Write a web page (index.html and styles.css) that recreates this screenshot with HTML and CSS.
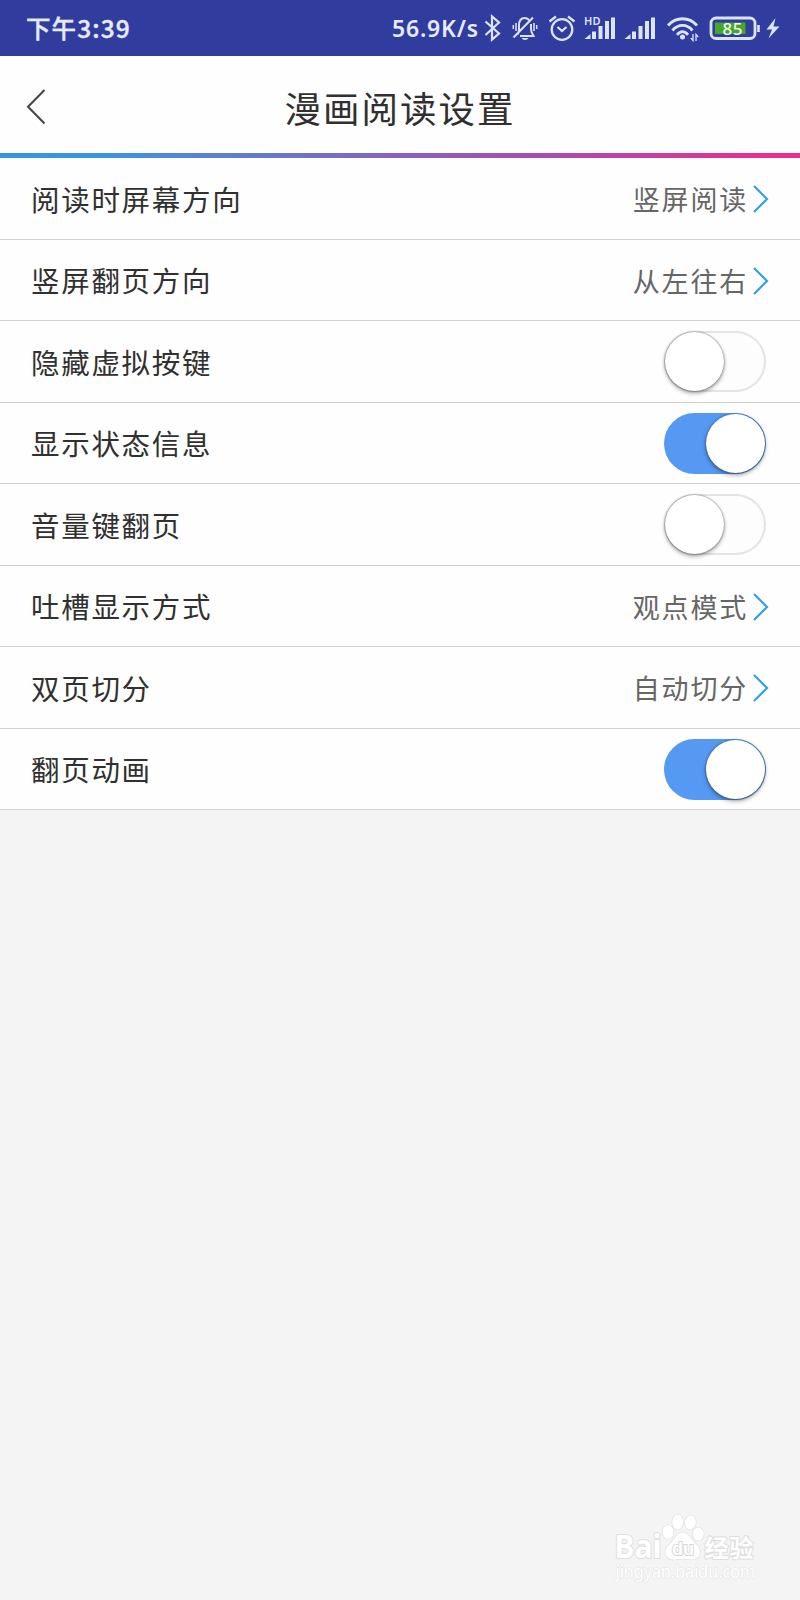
FILE: index.html
```html
<!DOCTYPE html>
<html lang="zh-CN">
<head>
    <meta charset="UTF-8">
    <meta name="viewport" content="width=device-width, initial-scale=1.0">
    <title>漫画阅读设置</title>
    <link rel="stylesheet" href="styles.css">
</head>
<body>

<div class="status-bar">
    <span class="clock">下午3:39</span>
    <div class="status-right">
        <span class="speed">56.9K/s</span>
        <svg class="status-icons" width="300" height="56" viewBox="480 0 300 56" fill="none" stroke="#dde4ff" stroke-width="2">
            <!-- bluetooth -->
            <path d="M485.500 21.500L499 33.500L492 39.500V16.500L499 22.500L485.500 35" stroke-width="2.200"/>
            <!-- muted bell -->
            <path d="M517.500 34.500C519.500 32 519 29 519 25.500C519 20.500 521 18 524.500 18C526.500 18 528 18.800 529 20M531 24V29C531 32 532 33.500 533.500 36H520M513.500 37.500L533 17.500"/>
            <path d="M516 23V31M513.300 25V29M534 23V31M536.700 25V29" stroke-width="1.500"/>
            <path d="M521.500 38H528.500C527 40.500 523 40.500 521.500 38Z" fill="#dde4ff" stroke="none"/>
            <!-- alarm -->
            <circle cx="562" cy="29.500" r="10.300" stroke-width="2.300"/>
            <path d="M557.500 27L562 31L566.500 27M549.500 21.500L556 16.500M568 16.500L574.500 21.500" stroke-width="2.300"/>
            <!-- signal -->
            <g fill="#dde4ff" stroke="none">
                <path d="M584.500 39L590.500 34V39ZM592 31.500H596V39H592ZM598.500 26H602.500V39H598.500ZM605 21H609V39H605ZM611 17.500H615V39H611Z"/>
                <path d="M624.500 39L630.500 34V39ZM632 31.500H636V39H632ZM638.500 26H642.500V39H638.500ZM645 21H649V39H645ZM651 17.500H655V39H651Z"/>
            </g>
            <text class="hd" x="584" y="24.500" textLength="16.500">HD</text>
            <!-- wifi -->
            <path d="M668 25.500C676 16.500 689 16.500 697 25.500M672.500 30.500C678 23.800 687 23.800 692.500 30.500M677 34.800C680.500 30.500 684.500 30.500 688 34.800" stroke-width="2.800"/>
            <circle cx="682.500" cy="37" r="2.500" fill="#dde4ff" stroke="none"/>
            <path d="M693 34V40.500L690.800 38M696 41V34.500L698.200 37" stroke-width="1.300"/>
            <!-- battery -->
            <rect x="711" y="18" width="44" height="20.500" rx="5" stroke-width="2.800"/>
            <rect x="715" y="22.500" width="30.500" height="11.500" fill="#47a52c" stroke="none"/>
            <path d="M758.500 25V32" stroke-width="2.600"/>
            <text class="battery-text" x="722.500" y="34.800" textLength="20">85</text>
            <path d="M775.500 18L766.500 29.500H772L768.500 38.500L779.500 26.500H773.500Z" fill="#dde4ff" stroke="none"/>
        </svg>
    </div>
</div>

<header>
    <svg class="back" width="20" height="36" viewBox="0 0 20 36"><path d="M18.500 1L2 17.800L18.500 34.500"/></svg>
    <h1>漫画阅读设置</h1>
</header>

<ul class="settings">
    <li>
        <span class="label">阅读时屏幕方向</span>
        <span class="value">竖屏阅读</span>
        <svg class="arrow" width="16" height="28" viewBox="0 0 16 28"><path d="M1 1L14 14L1 27"/></svg>
    </li>
    <li>
        <span class="label">竖屏翻页方向</span>
        <span class="value">从左往右</span>
        <svg class="arrow" width="16" height="28" viewBox="0 0 16 28"><path d="M1 1L14 14L1 27"/></svg>
    </li>
    <li>
        <span class="label">隐藏虚拟按键</span>
        <span class="switch"><span class="knob"></span></span>
    </li>
    <li>
        <span class="label">显示状态信息</span>
        <span class="switch on"><span class="knob"></span></span>
    </li>
    <li>
        <span class="label">音量键翻页</span>
        <span class="switch"><span class="knob"></span></span>
    </li>
    <li>
        <span class="label">吐槽显示方式</span>
        <span class="value">观点模式</span>
        <svg class="arrow" width="16" height="28" viewBox="0 0 16 28"><path d="M1 1L14 14L1 27"/></svg>
    </li>
    <li>
        <span class="label">双页切分</span>
        <span class="value">自动切分</span>
        <svg class="arrow" width="16" height="28" viewBox="0 0 16 28"><path d="M1 1L14 14L1 27"/></svg>
    </li>
    <li>
        <span class="label">翻页动画</span>
        <span class="switch on"><span class="knob"></span></span>
    </li>
</ul>

<footer>
    <svg width="150" height="80" viewBox="610 1510 150 80">
        <g class="mark">
            <ellipse cx="668" cy="1532" rx="5.500" ry="7"/>
            <ellipse cx="677.700" cy="1522" rx="5.500" ry="7.500"/>
            <ellipse cx="690.300" cy="1522.500" rx="5.500" ry="7" transform="rotate(10 690.300 1522.500)"/>
            <ellipse cx="698.300" cy="1534" rx="5.500" ry="6.500"/>
            <path d="M682.500 1533C675 1533 674 1541 669 1545C662 1551 666 1560 674 1559.500C680 1559 685 1559 691 1559.500C700 1560 703 1551 697 1545C691 1540 690 1533 682.500 1533Z"/>
            <text class="bai" x="614.500" y="1558" textLength="47" lengthAdjust="spacingAndGlyphs">Bai</text>
            <text class="du" x="672" y="1554.500" textLength="22" lengthAdjust="spacingAndGlyphs">du</text>
            <text class="jingyan" x="704.500" y="1557" textLength="49">经验</text>
            <text class="site" x="615.500" y="1578" textLength="139.500" lengthAdjust="spacingAndGlyphs">jingyan.baidu.com</text>
        </g>
    </svg>
</footer>

</body>
</html>
```
FILE: styles.css
```css
* {
    box-sizing: border-box;
}

body {
    margin: 0;
    width: 800px;
    height: 1600px;
    display: flex;
    flex-direction: column;
    font-family: "Noto Sans CJK SC", sans-serif;
    background-color: #f4f4f4;
    color: #303030;
    overflow: hidden;
}

/* Phone status bar */
.status-bar {
    display: flex;
    justify-content: space-between;
    align-items: center;
    height: 56px;
    padding: 0 20px 0 26px;
    background-color: #303c9e;
    color: #e6ebff;
    font-weight: 700;
}

.clock {
    font-size: 24.5px;
    letter-spacing: 1.1px;
    font-weight: 500;
    padding-bottom: 2px;
    -webkit-text-stroke: 0.4px #e6ebff;
}

.status-right {
    display: flex;
    align-items: center;
}

.speed {
    font-family: "Noto Sans", sans-serif;
    font-size: 23px;
    font-weight: 600;
    letter-spacing: 0.8px;
    width: 88px;
    white-space: nowrap;
}

.hd {
    font: 600 11px "Noto Sans", sans-serif;
    fill: #dde4ff;
    stroke: none;
}

.battery-text {
    font: 500 17px "Noto Sans", sans-serif;
    fill: #f4fff4;
    stroke: none;
}

/* Title bar */
header {
    display: flex;
    align-items: center;
    height: 102px;
    padding: 0 26px;
    background-color: #fefefe;
    border-bottom: 5px solid;
    border-image: linear-gradient(to right, #3498db, #3b96dc 13%, #7270cb 38%, #a64db5 67%, #e6318f 95%) 1;
}

.back {
    margin-top: 4px;
}

.back path {
    fill: none;
    stroke: #444;
    stroke-width: 2;
}

h1 {
    flex: 1;
    margin: 5px 20px 0 0;
    text-align: center;
    font-size: 36.5px;
    font-weight: 400;
    letter-spacing: 2px;
}

/* Settings list */
.settings {
    margin: 0;
    padding: 0;
    list-style: none;
}

.settings li {
    display: flex;
    align-items: center;
    height: 81.5px;
    padding: 0 31px;
    background-color: #fefefe;
    border-bottom: 1px solid #d2d2d2;
}

.label {
    flex: 1;
    font-size: 28.5px;
    letter-spacing: 1.7px;
}

.value {
    font-size: 27px;
    letter-spacing: 1.8px;
    color: #666;
    padding-top: 1px;
    margin-right: 5px;
}

.arrow {
    margin-top: 2px;
}

.arrow path {
    fill: none;
    stroke: #2f9fe8;
    stroke-width: 2.2;
}

.switch {
    display: flex;
    width: 102px;
    height: 61px;
    margin: 1px 3.5px 0 0;
    padding: 1px;
    border-radius: 31px;
    background-color: #fefdfd;
    box-shadow: inset 0 0 0 2px #e6e3e3;
}

.switch.on {
    justify-content: flex-end;
    background-color: #5599f2;
    box-shadow: none;
}

.knob {
    width: 59px;
    height: 59px;
    border-radius: 50%;
    background-color: #fff;
    box-shadow: 0 2px 4px rgba(0, 0, 0, 0.4), 0 0 2px rgba(0, 0, 0, 0.5);
}

/* Watermark */
footer {
    margin-top: auto;
    padding: 0 40px 10px 0;
    text-align: right;
}

footer svg {
    display: block;
    margin-left: auto;
}

.mark {
    fill: #fff;
    stroke: #dedede;
    stroke-width: 1.2px;
    paint-order: stroke;
}

.bai {
    font: 700 32px "Noto Sans", sans-serif;
    stroke-width: 2px;
}

.du {
    font: 700 19px "Liberation Sans", sans-serif;
    stroke: #d6d6d6;
    stroke-width: 2px;
}

.jingyan {
    font: 700 24px "Noto Sans CJK SC", sans-serif;
    stroke-width: 2px;
}

.site {
    font: 400 18px "Noto Sans", sans-serif;
    stroke: #e4e4e4;
}
```
